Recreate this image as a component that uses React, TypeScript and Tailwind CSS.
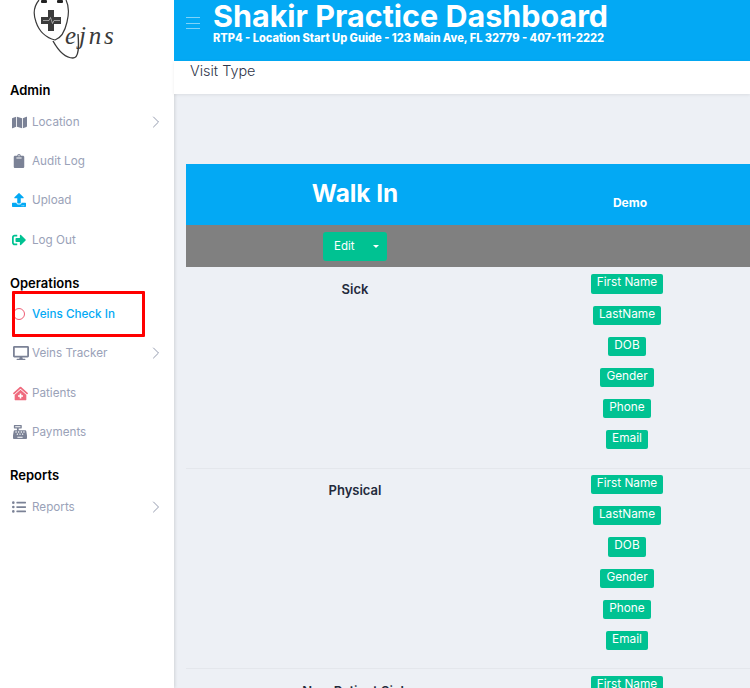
import { FaMap, FaClipboard, FaUpload, FaSignOutAlt, FaDesktop, FaClinicMedical, FaCashRegister, FaListUl } from "react-icons/fa";
import { ChevronRight } from "lucide-react";
import type { ReactNode } from "react";

function Logo() {
  return (
    <div className="relative h-[61px] w-full">
      <svg viewBox="0 0 125 65" className="absolute left-0 top-0 h-[65px] w-[125px]" fill="none">
        <path d="M39 0 C34 6 33 14 36 22 C39 31 46 38 55 40 C61 38 65 31 67 22 C69 14 69 6 66 0" stroke="#3a3a3a" strokeWidth="1.200" />
        <rect x="41" y="0" width="6" height="3" rx="1" fill="#222" />
        <rect x="57" y="0" width="6" height="3" rx="1" fill="#222" />
        <path d="M48 10h6v7h7v7h-7v7h-6v-7h-7v-7h7z" fill="#3c3c3c" />
        <path d="M43 20.500h6l1.500-3 2 6 1.500-3h6" stroke="#ddd" strokeWidth="0.600" />
        <path d="M53 41 C58 50 65 58 73 58 C79 58 79 46 78 34" stroke="#3a3a3a" strokeWidth="1.400" />
      </svg>
      <span className="absolute left-[65px] top-[24px] font-['Liberation_Serif',serif] text-[25px] italic leading-[24px] tracking-[2.800px] text-[#3a3a3a]">ejns</span>
    </div>
  );
}

function Heading({ children }: { children: ReactNode }) {
  return <div className="pl-[10px] text-[13px] font-semibold leading-[18px] text-black">{children}</div>;
}

function Item({ icon, label, chevron, active, className }: { icon: ReactNode; label: string; chevron?: boolean; active?: boolean; className?: string }) {
  return (
    <div className={`flex h-[20px] items-center pl-[12px] pr-[8px] ${className ?? ""}`}>
      <span className="flex w-[20px] items-center">{icon}</span>
      <span className={`text-[11.700px] leading-[20px] ${active ? "font-medium text-[#03a9f4]" : "text-[#9aa2b8]"}`}>{label}</span>
      {chevron && <ChevronRight className="ml-auto text-[#8a92a6]" size={20} strokeWidth={1.100} />}
    </div>
  );
}

function Tag({ children, tall }: { children: string; tall?: boolean }) {
  return (
    <div className={`flex items-start rounded-[2px] bg-[#00c292] px-[6px] text-[11.800px] leading-[16px] text-white ${tall ? "h-[20px]" : "h-[19px]"}`}>
      {children}
    </div>
  );
}

function Row({ label, rowClass, padClass, labelClass, tallIndex }: { label: string; rowClass: string; padClass: string; labelClass: string; tallIndex: number }) {
  const tags = ["First Name", "LastName", "DOB", "Gender", "Phone", "Email"];
  return (
    <div className={`grid grid-cols-[338px_206px] ${rowClass}`}>
      <div className={`text-center text-[13px] font-semibold leading-[18px] text-[#232a3b] ${labelClass}`}>{label}</div>
      <div className={`flex flex-col items-center gap-[12px] ${padClass}`}>
        {tags.map((t, i) => (
          <Tag key={t} tall={i === tallIndex}>{t}</Tag>
        ))}
      </div>
    </div>
  );
}

export default function App() {
  return (
    <div className="relative flex h-[688px] w-[750px] overflow-hidden bg-[#edf0f5] font-['Inter',sans-serif]">
      <aside className="h-full w-[174px] shrink-0 bg-white shadow-[1px_0_3px_rgba(0,0,0,0.12)]">
        <Logo />
        <div className="mt-[20px]"><Heading>Admin</Heading></div>
        <Item className="mt-[13px]" icon={<FaMap size={15} className="text-[#7b8296]" />} label="Location" chevron />
        <Item className="mt-[19px]" icon={<FaClipboard size={14} className="text-[#7b8296]" />} label="Audit Log" />
        <Item className="mt-[19px]" icon={<FaUpload size={14} className="text-[#03a9f4]" />} label="Upload" />
        <Item className="mt-[20px]" icon={<FaSignOutAlt size={14} className="text-[#00c292]" />} label="Log Out" />
        <div className="mt-[24px]"><Heading>Operations</Heading></div>
        <Item className="mt-[12px]" active icon={<span className="ml-[1px] h-[12px] w-[12px] rounded-full border border-[#ef5d75]" />} label="Veins Check In" />
        <Item className="mt-[19px]" icon={<FaDesktop size={16} className="ml-[1px] text-[#7b8296]" />} label="Veins Tracker" chevron />
        <Item className="mt-[20px]" icon={<FaClinicMedical size={15} className="ml-[1px] text-[#ef6a7d]" />} label="Patients" />
        <Item className="mt-[19px]" icon={<FaCashRegister size={14} className="ml-[1px] text-[#7b8296]" />} label="Payments" />
        <div className="mt-[24px]"><Heading>Reports</Heading></div>
        <Item className="mt-[13px]" icon={<FaListUl size={14} className="text-[#7b8296]" />} label="Reports" chevron />
      </aside>

      <main className="min-w-0 flex-1">
        <header className="flex h-[61px] bg-[#03a9f4] pl-[12px] text-white">
          <div className="mt-[17px] flex h-[12px] w-[14px] flex-col justify-between">
            <span className="h-px bg-[#7fd3f9]" />
            <span className="h-px bg-[#7fd3f9]" />
            <span className="h-px bg-[#7fd3f9]" />
          </div>
          <div className="ml-[13px]">
            <div className="whitespace-nowrap text-[30.500px] font-bold leading-[32px]">Shakir Practice Dashboard</div>
            <div className="whitespace-nowrap text-[11.050px] font-extrabold leading-[12px]">RTP4 - Location Start Up Guide - 123 Main Ave, FL 32779 - 407-111-2222</div>
          </div>
        </header>
        <div className="h-[33px] bg-white pl-[16px] text-[14.400px] font-light leading-[20px] text-[#30364a] shadow-[0_1px_3px_rgba(0,0,0,0.08)]">Visit Type</div>

        <section className="ml-[12px] mt-[70px]">
          <div className="grid h-[61px] grid-cols-[338px_206px] items-center bg-[#03a9f4] text-white">
            <div className="pb-[2px] text-center text-[24.300px] font-bold">Walk In</div>
            <div className="pl-[6px] pt-[16px] text-center text-[12px] font-bold">Demo</div>
          </div>
          <div className="grid h-[42px] grid-cols-[338px_206px] items-center bg-[#808080]">
            <div className="flex justify-center">
              <button className="flex h-[29px] w-[64px] items-center rounded-[3px] bg-[#00c292] pl-[11px] pt-[1px] text-[11.500px] text-white">
                Edit
                <span className="ml-[18px] h-0 w-0 border-x-[3.500px] border-t-[3.500px] border-x-transparent border-t-white" />
              </button>
            </div>
          </div>
          <Row label="Sick" rowClass="h-[202px] border-b border-[#e4e7ec]" padClass="pt-[7px]" labelClass="pt-[13px]" tallIndex={0} />
          <Row label="Physical" rowClass="h-[200px] border-b border-[#e4e7ec]" padClass="pt-[6px]" labelClass="pt-[12px]" tallIndex={2} />
          <Row label="New Patient Sick" rowClass="" padClass="pt-[7px]" labelClass="pt-[13px]" tallIndex={-1} />
        </section>
      </main>

      <div className="absolute left-[12px] top-[291px] h-[46px] w-[133px] rounded-[1px] border-[3px] border-[#ff0000]" />
    </div>
  );
}
